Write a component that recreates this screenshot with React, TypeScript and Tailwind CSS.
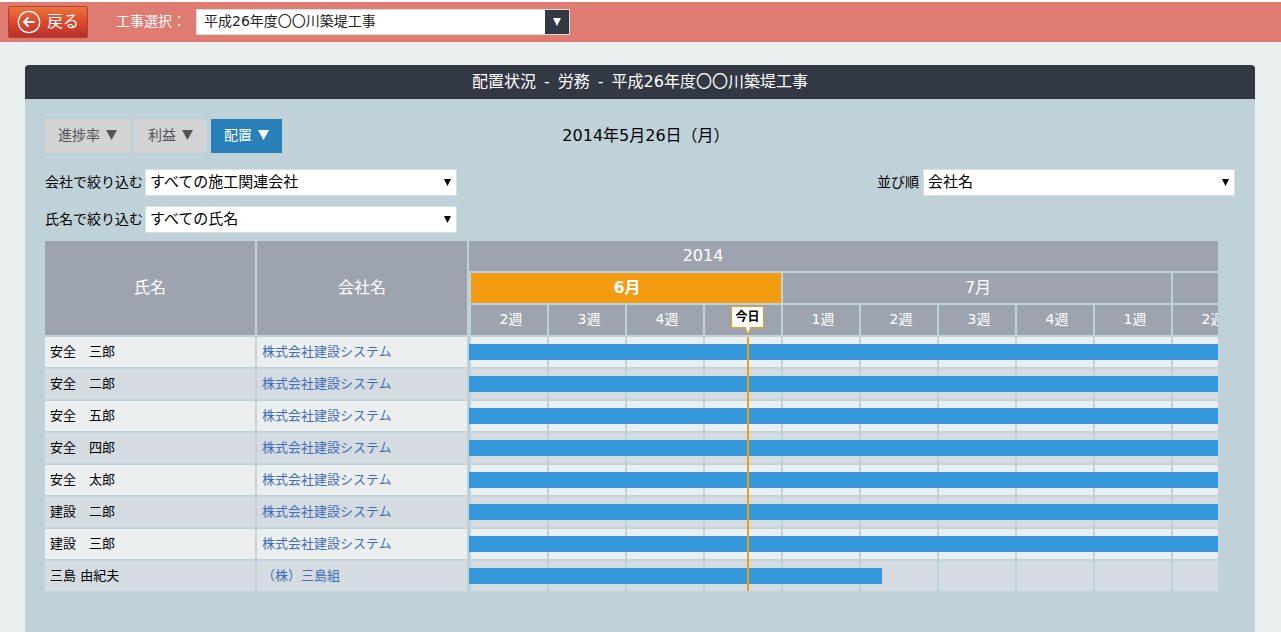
import { useId } from "react";
import type { ReactNode } from "react";

const COMPANY = "株式会社建設システム";

type Worker = { name: string; company: string; bar: number };

const workers: Worker[] = [
  { name: "安全　三郎", company: COMPANY, bar: 780 },
  { name: "安全　二郎", company: COMPANY, bar: 780 },
  { name: "安全　五郎", company: COMPANY, bar: 780 },
  { name: "安全　四郎", company: COMPANY, bar: 780 },
  { name: "安全　太郎", company: COMPANY, bar: 780 },
  { name: "建設　二郎", company: COMPANY, bar: 780 },
  { name: "建設　三郎", company: COMPANY, bar: 780 },
  { name: "三島 由紀夫", company: "（株）三島組", bar: 413 },
];

const weeks = ["2週", "3週", "4週", "", "1週", "2週", "3週", "4週", "1週", "2週"];

function Triangle({ className }: { className: string }) {
  return (
    <svg viewBox="0 0 10 10" preserveAspectRatio="none" className={className} aria-hidden="true">
      <path d="M0 0H10L5 10Z" fill="currentColor" />
    </svg>
  );
}

function BackButton() {
  return (
    <button
      type="button"
      className="flex h-8 w-20 items-center gap-1.5 rounded-[2px] border border-[#b83f2d] bg-linear-to-b from-[#e8743f] via-[#dc4a2b] via-48% to-[#b5322f] pl-2 text-base leading-6 text-white"
    >
      <svg viewBox="0 0 24 24" className="size-6 shrink-0" fill="none" stroke="currentColor" aria-hidden="true">
        <circle cx="12" cy="12" r="10.7" strokeWidth="1.3" />
        <path d="M17.5 12H7M11.5 7.4L6.9 12L11.5 16.6" strokeWidth="1.9" />
      </svg>
      戻る
    </button>
  );
}

function TabButton({ active = false, children }: { active?: boolean; children: ReactNode }) {
  return (
    <button
      type="button"
      className={
        active
          ? "flex h-[34px] items-center gap-1.5 bg-[#2980b9] px-[13px] pb-0.5 text-sm text-white"
          : "flex h-[34px] items-center gap-1.5 bg-[#d3d3d3] px-[13px] pb-0.5 text-sm text-[#555]"
      }
    >
      {children}
      <Triangle className="h-2.5 w-[11px]" />
    </button>
  );
}

function Filter({ label, value, labelClass }: { label: string; value: string; labelClass: string }) {
  const id = useId();
  return (
    <div className="flex items-center">
      <label htmlFor={id} className={labelClass}>
        {label}
      </label>
      <div className="relative">
        <select
          id={id}
          className="block h-[27px] w-[312px] appearance-none border border-[#dcdfe2] bg-white pr-6 pb-0.5 pl-1 text-[15px] leading-6 text-black"
        >
          <option>{value}</option>
        </select>
        <Triangle className="pointer-events-none absolute top-2.5 right-1.5 h-[7px] w-[7px]" />
      </div>
    </div>
  );
}

function Schedule() {
  const head = "border-b-2 border-[#c0d2d9] bg-[#9da4b0] p-0 font-normal text-white";
  return (
    <div className="mr-[17px] overflow-hidden">
      <div className="relative">
        <table className="w-[1204px] table-fixed border-separate border-spacing-0">
          <colgroup>
            <col className="w-[212px]" />
            <col className="w-[212px]" />
            {weeks.map((_, i) => (
              <col key={i} className="w-[78px]" />
            ))}
          </colgroup>
          <thead>
            <tr className="h-8">
              <th rowSpan={3} className={`${head} border-r-2 text-base`}>
                氏名
              </th>
              <th rowSpan={3} className={`${head} border-r-2 text-base`}>
                会社名
              </th>
              <th colSpan={weeks.length} className={`${head} text-base leading-6`}>
                <span className="block w-[468px]">2014</span>
              </th>
            </tr>
            <tr className="h-8">
              <th
                colSpan={4}
                className="border-b-2 border-l-2 border-[#c0d2d9] bg-[#f39c12] p-0 pl-0.5 text-base leading-6 font-bold text-white"
              >
                6月
              </th>
              <th colSpan={5} className={`${head} border-l-2 pl-0.5 text-base leading-6`}>
                7月
              </th>
              <th className={`${head} border-l-2`} />
            </tr>
            <tr className="h-8">
              {weeks.map((week, i) => (
                <th key={i} className={`${head} border-l-2 pb-0.5 pl-1 text-sm leading-6`}>
                  {week}
                </th>
              ))}
            </tr>
          </thead>
          <tbody>
            {workers.map((worker) => (
              <tr key={worker.name} className="h-8 bg-[#ebefef] text-[13px] leading-6 even:bg-[#d4dce2]">
                <td className="border-r-2 border-b-2 border-[#c0d2d9] p-0 pl-[5px] text-black">{worker.name}</td>
                <td className="border-r-2 border-b-2 border-[#c0d2d9] p-0 pl-[5px]">
                  <a href="#company" className="text-[#3f6cb5]">
                    {worker.company}
                  </a>
                </td>
                {weeks.map((_, i) => (
                  <td key={i} className="relative border-b-2 border-l-2 border-[#c0d2d9] p-0">
                    {i === 0 && (
                      <div
                        className="absolute top-[7px] -left-0.5 z-10 h-4 bg-[#3498db]"
                        style={{ width: worker.bar }}
                      />
                    )}
                  </td>
                ))}
              </tr>
            ))}
          </tbody>
        </table>
        <div className="absolute top-24 bottom-0.5 left-[702px] z-20 w-0.5 bg-[#f39c12]" />
        <div className="absolute top-[65px] left-[686px] z-20 flex h-[22px] w-[33px] items-center justify-center border border-[#f39c12] bg-white text-xs font-bold text-black">
          今日
          <svg viewBox="0 0 8 9" className="absolute top-[19px] left-3 h-[9px] w-2" aria-hidden="true">
            <path d="M1 0V1L4 8L7 1V0Z" fill="#fff" />
            <path d="M1 1L4 8L7 1" fill="none" stroke="#f39c12" />
          </svg>
        </div>
      </div>
    </div>
  );
}

export default function App() {
  return (
    <div className="flex min-h-screen flex-col border-t-2 border-white bg-[#e9eeee] font-['DejaVu_Sans','Noto_Sans_CJK_JP',sans-serif] text-black">
      <header className="flex h-10 items-center bg-[#de7c72] pl-2">
        <BackButton />
        <label htmlFor="project" className="ml-7 w-20 pb-0.5 text-sm leading-6 text-white">
          工事選択：
        </label>
        <div className="relative">
          <select
            id="project"
            className="block h-[26px] w-[374px] appearance-none border border-[#d9dcdc] bg-white pr-7 pb-0.5 pl-[7px] text-sm leading-5 text-[#222]"
          >
            <option>平成26年度〇〇川築堤工事</option>
          </select>
          <span className="pointer-events-none absolute inset-y-px right-px flex w-6 items-center justify-center bg-[#323844] text-white">
            <Triangle className="h-2 w-2" />
          </span>
        </div>
      </header>

      <main className="mt-[23px] mr-[26px] ml-[25px] flex-1 rounded-t-[4px] bg-[#c0d2d9]">
        <h1 className="flex h-[34px] items-center justify-center gap-2 rounded-t-[4px] bg-[#323844] text-base text-white">
          <span>配置状況</span>
          <span>-</span>
          <span>労務</span>
          <span>-</span>
          <span>平成26年度〇〇川築堤工事</span>
        </h1>

        <div className="px-5 pt-5">
          <div className="grid grid-cols-[1fr_auto_1fr] items-center">
            <div className="flex gap-[5px]">
              <TabButton>進捗率</TabButton>
              <TabButton>利益</TabButton>
              <TabButton active>配置</TabButton>
            </div>
            <p className="pl-3 text-base leading-6">2014年5月26日（月）</p>
          </div>

          <div className="mt-4 flex items-start justify-between">
            <div className="flex flex-col gap-2.5">
              <Filter label="会社で絞り込む" value="すべての施工関連会社" labelClass="w-[100px] pb-0.5 text-sm" />
              <Filter label="氏名で絞り込む" value="すべての氏名" labelClass="w-[100px] pb-0.5 text-sm" />
            </div>
            <Filter label="並び順" value="会社名" labelClass="w-[46px] pb-0.5 text-sm" />
          </div>

          <div className="mt-2">
            <Schedule />
          </div>
        </div>
      </main>
    </div>
  );
}
